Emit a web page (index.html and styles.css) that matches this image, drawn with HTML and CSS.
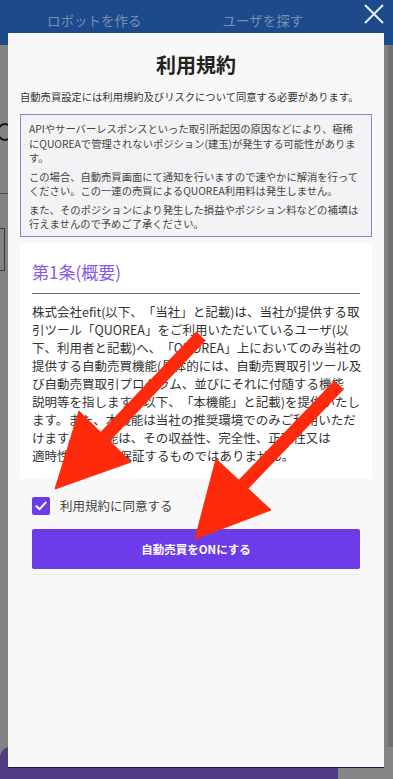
FILE: index.html
```html
<!DOCTYPE html>
<html lang="ja">
<head>
<meta charset="utf-8">
<title>利用規約</title>
<link rel="stylesheet" href="styles.css">
</head>
<body>
<div class="page">
  <header class="topbar">
    <nav class="nav"><span>ロボットを作る</span><span>ユーザを探す</span></nav>
  </header>
  <div class="main">
    <div class="content">
      <div class="ghost-c"></div>
      <div class="ghost-line"></div>
      <div class="ghost-box"></div>
    </div>
    <div class="scrollbar"></div>
  </div>
  <footer class="footer"><div class="footer-tab"></div><div class="footer-rest"></div></footer>
</div>

<button class="close" aria-label="閉じる">
  <svg width="20" height="20" viewBox="0 0 20 20"><path d="M1 1L19 19M19 1L1 19" stroke="#eef2f7" stroke-width="2" fill="none"/></svg>
</button>

<div class="modal">
  <h1 class="modal-title">利用規約</h1>
  <p class="modal-desc">自動売買設定には利用規約及びリスクについて同意する必要があります。</p>
  <div class="notice">
    <p>APIやサーバーレスポンスといった取引所起因の原因などにより、極稀<br>にQUOREAで管理されないポジション(建玉)が発生する可能性がありま<br>す。</p>
    <p>この場合、自動売買画面にて通知を行いますので速やかに解消を行って<br>ください。この一連の売買によるQUOREA利用料は発生しません。</p>
    <p>また、そのポジションにより発生した損益やポジション料などの補填は<br>行えませんので予めご了承ください。</p>
  </div>
  <section class="card">
    <h2 class="card-title">第1条(概要)</h2>
    <p class="card-body">株式会社efit(以下、「当社」と記載)は、当社が提供する取<br>引ツール「QUOREA」をご利用いただいているユーザ(以<br>下、利用者と記載)へ、「QUOREA」上においてのみ当社の<br>提供する自動売買機能(具体的には、自動売買取引ツール及<br>び自動売買取引プログラム、並びにそれに付随する機能<br>説明等を指します。以下、「本機能」と記載)を提供いたし<br>ます。また、本機能は当社の推奨環境でのみご利用いただ<br>けます。本機能は、その収益性、完全性、正確性又は<br>適時性を当社が保証するものではありません。</p>
  </section>
  <div class="agree">
    <span class="checkbox"><svg width="14" height="14" viewBox="0 0 14 14"><path d="M2.5 7.2L5.6 10.2L11.6 3.6" stroke="#fff" stroke-width="2" fill="none" stroke-linecap="round" stroke-linejoin="round"/></svg></span>
    <span class="agree-label">利用規約に同意する</span>
  </div>
  <button class="submit">自動売買をONにする</button>
  <div class="divider"></div>
</div>

<svg class="arrows" width="393" height="779" viewBox="0 0 393 779">
  <g fill="#fe2a0c" stroke="#fe2a0c">
    <line x1="201" y1="336" x2="100" y2="442" stroke-width="13"/>
    <polygon points="55,489 79,411 131,462" stroke-width="1"/>
    <line x1="339" y1="385" x2="238" y2="490" stroke-width="13"/>
    <polygon points="195,539 216,459 271,510" stroke-width="1"/>
  </g>
</svg>
</body>
</html>
```
FILE: styles.css
```css
html, body {
  margin: 0;
  padding: 0;
}
body {
  width: 393px;
  height: 779px;
  overflow: hidden;
  position: relative;
  font-family: "Noto Sans CJK JP", "Noto Sans", sans-serif;
  text-spacing-trim: space-all;
  background: #808080;
}
.page {
  display: flex;
  flex-direction: column;
  height: 779px;
}
.topbar {
  height: 45px;
  background: #1c4a8a;
  flex: none;
}
.nav {
  display: flex;
  gap: 81px;
  padding: 10px 0 0 47px;
  font-size: 13.5px;
  line-height: 20px;
  color: #7890b6;
}
.main {
  flex: 1;
  display: flex;
}
.content {
  flex: 1;
  padding-top: 78px;
  background: #828282;
}
.ghost-c {
  width: 12px;
  height: 14px;
  margin-left: -3px;
  border: 2px solid #141414;
  border-right-color: transparent;
  border-radius: 50%;
}
.ghost-line {
  margin-top: 52px;
  height: 1px;
  width: 20px;
  background: #4e4676;
}
.ghost-box {
  margin-top: 34px;
  margin-left: -2px;
  width: 5px;
  height: 41px;
  border: 1px solid #3a3a3a;
}
.scrollbar {
  width: 5px;
  background: #707070;
}
.footer {
  height: 32px;
  display: flex;
  flex: none;
}
.footer-tab {
  width: 338px;
  background: #503b82;
  border-top-left-radius: 10px;
}
.footer-rest {
  flex: 1;
  background: #858585;
}
.close {
  position: absolute;
  left: 364px;
  top: 4px;
  width: 20px;
  height: 20px;
  padding: 0;
  border: 0;
  background: none;
}
.close svg {
  display: block;
}
.modal {
  position: absolute;
  left: 8px;
  top: 33px;
  width: 376px;
  height: 735px;
  box-sizing: border-box;
  background: #f8f8f8;
  border-bottom: 1px solid #1e1352;
  padding: 18px 12px 0;
}
.modal-title {
  margin: 0;
  font-size: 20px;
  line-height: 28px;
  font-weight: 700;
  text-align: center;
  color: #222;
}
.modal-desc {
  margin: 11px 0 0;
  font-size: 10.3px;
  line-height: 14px;
  color: #333;
  white-space: nowrap;
}
.notice {
  margin-top: 10px;
  border: 1px solid #8d82d3;
  background: #f3f3f5;
  padding: 7px 4px 4px 8px;
}
.notice p {
  margin: 0;
  font-size: 10.3px;
  line-height: 14.5px;
  color: #444;
}
.notice p + p {
  margin-top: 4px;
}
.card {
  margin-top: 6px;
  background: #fff;
  padding: 17px 12px 14px;
}
.card-title {
  margin: 0;
  font-size: 17px;
  line-height: 24px;
  font-weight: 400;
  color: #8458e8;
  padding-bottom: 9px;
  border-bottom: 1px solid #6e6e6e;
}
.card-body {
  margin: 9px -12px 0 0;
  font-size: 12.5px;
  line-height: 18px;
  color: #333;
}
.agree {
  display: flex;
  align-items: center;
  gap: 10px;
  margin: 18px 12px 0;
}
.checkbox {
  width: 18px;
  height: 18px;
  border-radius: 2px;
  background: #6c3ce9;
  display: flex;
  align-items: center;
  justify-content: center;
}
.checkbox svg {
  display: block;
}
.agree-label {
  font-size: 12.5px;
  line-height: 18px;
  color: #444;
}
.submit {
  display: block;
  margin: 14px 12px 0;
  width: calc(100% - 24px);
  height: 40px;
  border: 0;
  border-radius: 2px;
  background: #6c3ce9;
  color: #fff;
  font-family: inherit;
  font-size: 11.5px;
  font-weight: 700;
}
.divider {
  margin: 5px 12px 0;
  height: 1px;
  background: #ececec;
}
.arrows {
  position: absolute;
  left: 0;
  top: 0;
  pointer-events: none;
}
```
